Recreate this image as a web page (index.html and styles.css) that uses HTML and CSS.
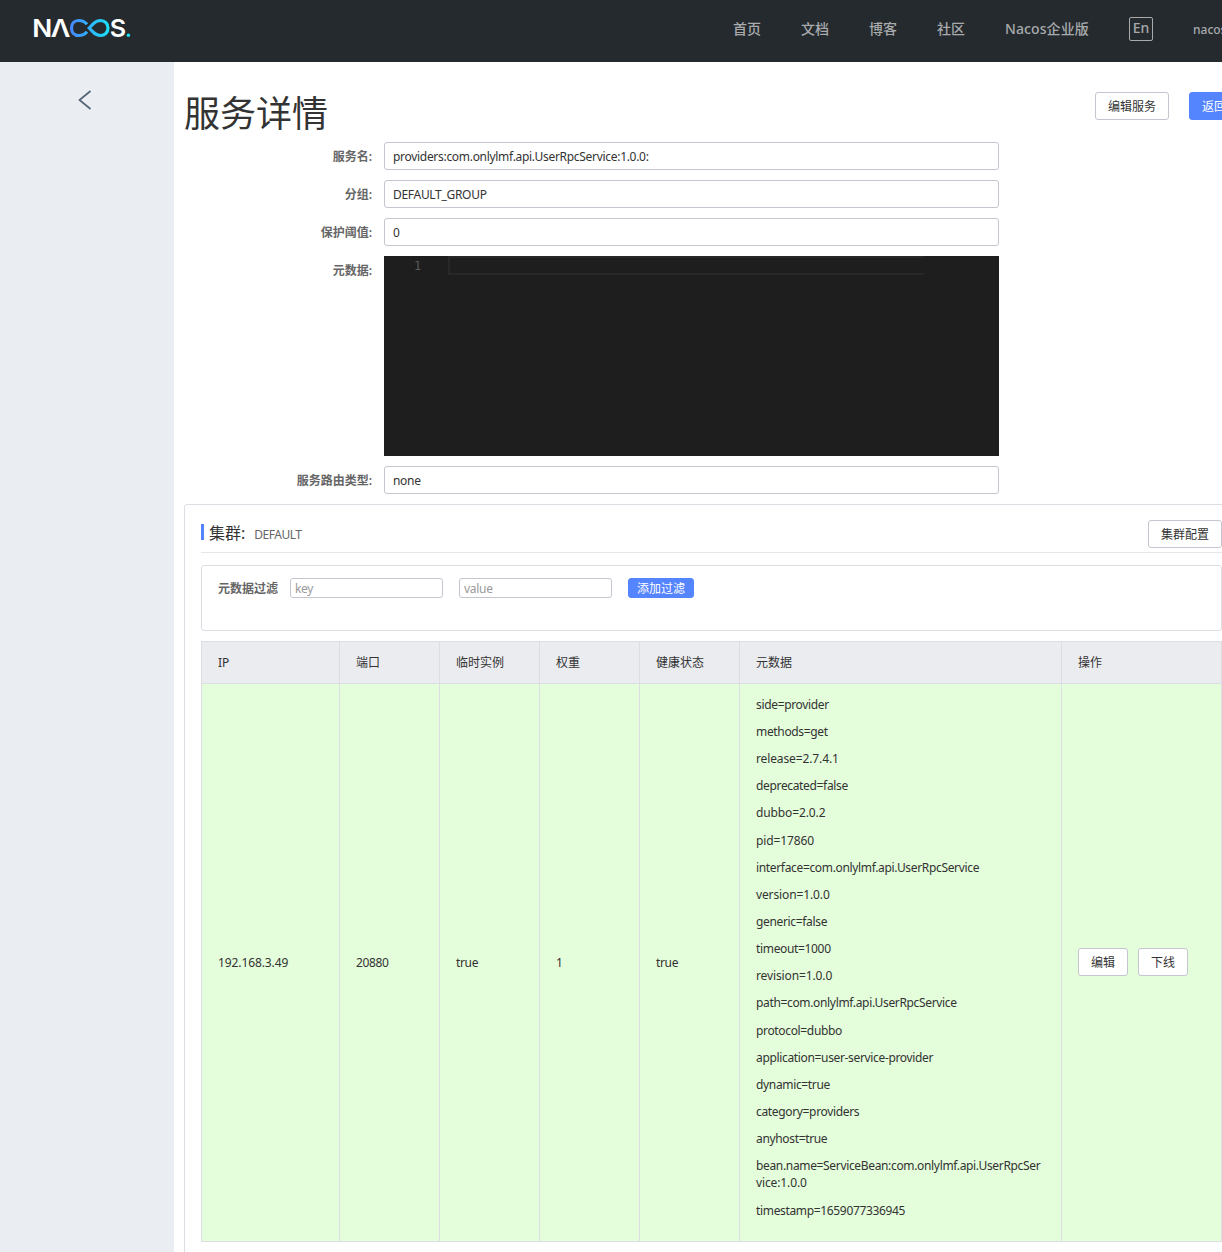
FILE: index.html
```html
<!DOCTYPE html>
<html lang="zh-CN">
<head>
<meta charset="utf-8">
<title>Nacos</title>
<link rel="stylesheet" href="styles.css">
</head>
<body>
<header class="topbar">
  <svg class="logo" width="104" height="36" viewBox="-4 -6 104 36" role="img" aria-label="Nacos">
    <defs>
      <linearGradient id="loop" gradientUnits="userSpaceOnUse" x1="36" y1="0" x2="77" y2="0">
        <stop offset="0" stop-color="#4687ff"/>
        <stop offset="1" stop-color="#18e4f7"/>
      </linearGradient>
    </defs>
    <g class="logo-text">
      <text x="-1.8" y="20.8" textLength="20" lengthAdjust="spacingAndGlyphs">N</text>
      <text x="16.8" y="20.8" textLength="19.6" lengthAdjust="spacingAndGlyphs">Λ</text>
      <text x="75.8" y="20.8" textLength="16.4" lengthAdjust="spacingAndGlyphs">S</text>
    </g>
    <g fill="none" stroke="url(#loop)" stroke-width="3.2">
      <path d="M53 8.3C50.6 5.6 48.5 4.5 44.8 4.5C40.2 4.5 37.5 7.8 37.5 12S40.2 19.5 44.8 19.5C48.5 19.5 50.6 18.4 53 15.7"/>
      <path d="M55.2 12L59.2 7.8C61.5 5.4 63.5 4.5 66.5 4.5C71 4.5 74 7.8 74 12S71 19.5 66.5 19.5C63.5 19.5 61.5 18.6 59.2 16.2Z"/>
    </g>
    <circle cx="94.4" cy="19.2" r="1.7" fill="#18e4f7"/>
  </svg>
  <nav class="nav">
    <a>首页</a><a>文档</a><a>博客</a><a>社区</a><a class="enterprise">Nacos企业版</a>
    <span class="lang">En</span>
    <span class="user">nacos</span>
  </nav>
</header>
<div class="layout">
  <aside class="sidebar">
    <svg class="back" width="14" height="20" viewBox="0 0 14 20"><path d="M12.5 1L1.5 10L12.5 19" fill="none" stroke="#546478" stroke-width="1.7"/></svg>
  </aside>
  <main class="main">
    <div class="title-row">
      <h1>服务详情</h1>
      <div class="title-actions"><button class="btn">编辑服务</button><button class="btn primary">返回</button></div>
    </div>
    <div class="form">
      <div class="field"><label>服务名:</label><div class="input">providers:com.onlylmf.api.UserRpcService:1.0.0:</div></div>
      <div class="field"><label>分组:</label><div class="input">DEFAULT_GROUP</div></div>
      <div class="field"><label>保护阈值:</label><div class="input">0</div></div>
      <div class="field"><label>元数据:</label><div class="editor"><span class="line-no">1</span><span class="line"></span></div></div>
      <div class="field"><label>服务路由类型:</label><div class="input">none</div></div>
    </div>
    <section class="panel">
      <div class="panel-head">
        <h2>集群:</h2><span class="cluster">DEFAULT</span>
        <button class="btn config">集群配置</button>
      </div>
      <div class="filter">
        <label>元数据过滤</label>
        <input class="small-input" placeholder="key">
        <input class="small-input" placeholder="value">
        <button class="btn primary small">添加过滤</button>
      </div>
      <table class="table">
        <colgroup><col class="c-ip"><col class="c-s"><col class="c-s"><col class="c-s"><col class="c-s"><col class="c-meta"><col class="c-op"></colgroup>
        <thead><tr><th>IP</th><th>端口</th><th>临时实例</th><th>权重</th><th>健康状态</th><th>元数据</th><th>操作</th></tr></thead>
        <tbody><tr>
          <td class="ip">192.168.3.49</td><td>20880</td><td>true</td><td>1</td><td>true</td>
          <td class="meta">
            <p>side=provider</p>
            <p>methods=get</p>
            <p class="numeric">release=2.7.4.1</p>
            <p>deprecated=false</p>
            <p class="numeric">dubbo=2.0.2</p>
            <p class="numeric">pid=17860</p>
            <p>interface=com.onlylmf.api.UserRpcService</p>
            <p class="numeric">version=1.0.0</p>
            <p>generic=false</p>
            <p>timeout=1000</p>
            <p class="numeric">revision=1.0.0</p>
            <p>path=com.onlylmf.api.UserRpcService</p>
            <p>protocol=dubbo</p>
            <p>application=user-service-provider</p>
            <p>dynamic=true</p>
            <p>category=providers</p>
            <p>anyhost=true</p>
            <p>bean.name=ServiceBean:com.onlylmf.api.UserRpcSer<br><span class="numeric">vice:1.0.0</span></p>
            <p>timestamp=1659077336945</p>
          </td>
          <td><div class="ops"><button class="btn op">编辑</button><button class="btn op">下线</button></div></td>
        </tr></tbody>
      </table>
    </section>
  </main>
</div>
</body>
</html>
```
FILE: styles.css
```css
* { box-sizing: border-box; }
html, body { height: 100%; overflow: hidden; }
body {
  margin: 0;
  font: 12px/17.143px "Noto Sans", "Noto Sans CJK SC", sans-serif;
  letter-spacing: -0.34px;
  color: #333;
  background: #fff;
}
h1, h2, p { margin: 0; font-weight: 400; }
.topbar { display: flex; height: 62px; background: #252a2f; overflow: hidden; }
.logo { flex: none; margin: 10px 0 0 30px; }
.logo-text { font: 600 24.5px/1 Inter, sans-serif; letter-spacing: 0; fill: #fff; }
.nav {
  display: flex;
  flex: none;
  gap: 40px;
  margin-left: 599px;
  padding-top: 17px;
  font-size: 14px;
  line-height: 24px;
  letter-spacing: 0;
  font-weight: 500;
  color: #a8aaac;
  white-space: nowrap;
}
.nav a { width: 28px; }
.nav .enterprise { width: 84px; letter-spacing: 0.1px; }
.lang { width: 24px; height: 24px; border: 1px solid #a8aaac; border-radius: 2px; line-height: 20px; text-align: center; }
.user { font-size: 12px; line-height: 26px; }
.layout { display: flex; height: 1190px; }
.sidebar { flex: none; width: 174px; background: #eaedf1; }
.back { display: block; margin: 27.5px 0 0 77.5px; }
.main { flex: none; width: 1065px; padding: 30px 0 0 10px; }
.title-row { display: flex; height: 50px; }
h1 { width: 911px; font-size: 36px; line-height: 43px; letter-spacing: 0; }
.title-actions { display: flex; gap: 20px; }
.btn {
  flex: none;
  width: 74px;
  height: 28px;
  padding: 2px 0 0;
  border: 1px solid #c4c6cf;
  border-radius: 3px;
  background: #fff;
  color: #333;
  font: inherit;
  letter-spacing: 0;
  white-space: nowrap;
}
.btn.primary { border-color: #5584ff; background: #5584ff; color: #fff; }
.title-actions .primary { width: 50px; }
.form { display: flex; flex-direction: column; gap: 10px; }
.field { display: flex; }
.field label { width: 200px; padding-right: 12px; line-height: 30px; height: 28px; text-align: right; font-weight: 600; letter-spacing: 0; color: #666; }
.input { width: 615px; height: 28px; padding: 0 8px; border: 1px solid #c4c6cf; border-radius: 3px; line-height: 28px; letter-spacing: -0.3px; }
.editor { display: flex; width: 615px; height: 200px; background: #1e1e1e; color: #5a5a5a; }
.line-no { width: 64px; padding-left: 30px; font: 12px/20px "DejaVu Sans Mono", monospace; }
.line { width: 476px; height: 19px; border: 2px solid #282828; border-right: 0; }
.panel { width: 1055px; height: 760px; margin-top: 10px; padding: 15px 16px; border: 1px solid #dcdee3; border-radius: 3px; }
.panel-head { display: flex; height: 33px; border-bottom: 1px solid #e6e7eb; }
h2 { align-self: flex-start; height: 16px; margin-top: 4px; padding-left: 5px; border-left: 3px solid #5584ff; font-size: 16px; line-height: 18px; letter-spacing: 0; }
.cluster { margin: 6px 0 0 9px; color: #666; letter-spacing: -0.5px; }
.config { margin-left: auto; }
.filter { display: flex; height: 66px; margin: 12px 0 10px; padding: 12px 16px; border: 1px solid #dcdee3; border-radius: 3px; }
.filter label { width: 72px; line-height: 22px; font-weight: 600; letter-spacing: 0; color: #666; }
.small-input { width: 153px; height: 20px; margin-right: 16px; padding: 0 4px; border: 1px solid #c4c6cf; border-radius: 3px; font: inherit; letter-spacing: -0.3px; }
.small-input::placeholder { color: #999; }
.btn.small { width: 66px; height: 20px; line-height: 18px; padding-top: 1px; }
.table { width: 1021px; table-layout: fixed; border-collapse: separate; border-spacing: 0; border: solid #dcdee3; border-width: 1px 0 0 1px; }
.c-ip { width: 138px; }
.c-s { width: 100px; }
.c-meta { width: 322px; }
.c-op { width: 160px; }
th, td { padding: 12px 16px; border: solid #dcdee3; border-width: 0 1px 1px 0; text-align: left; font-weight: 400; }
th { height: 42px; background: #ebecf0; letter-spacing: 0; }
td { height: 558px; background: #e4fdda; vertical-align: middle; }
td.ip { letter-spacing: -0.1px; }
td.meta { padding-top: 11.6px; padding-bottom: 12.4px; }
.meta p { margin-bottom: 10px; white-space: nowrap; }
.numeric { letter-spacing: -0.12px; }
.ops { display: flex; gap: 10px; margin-bottom: 2px; }
.op { width: 50px; }
```
